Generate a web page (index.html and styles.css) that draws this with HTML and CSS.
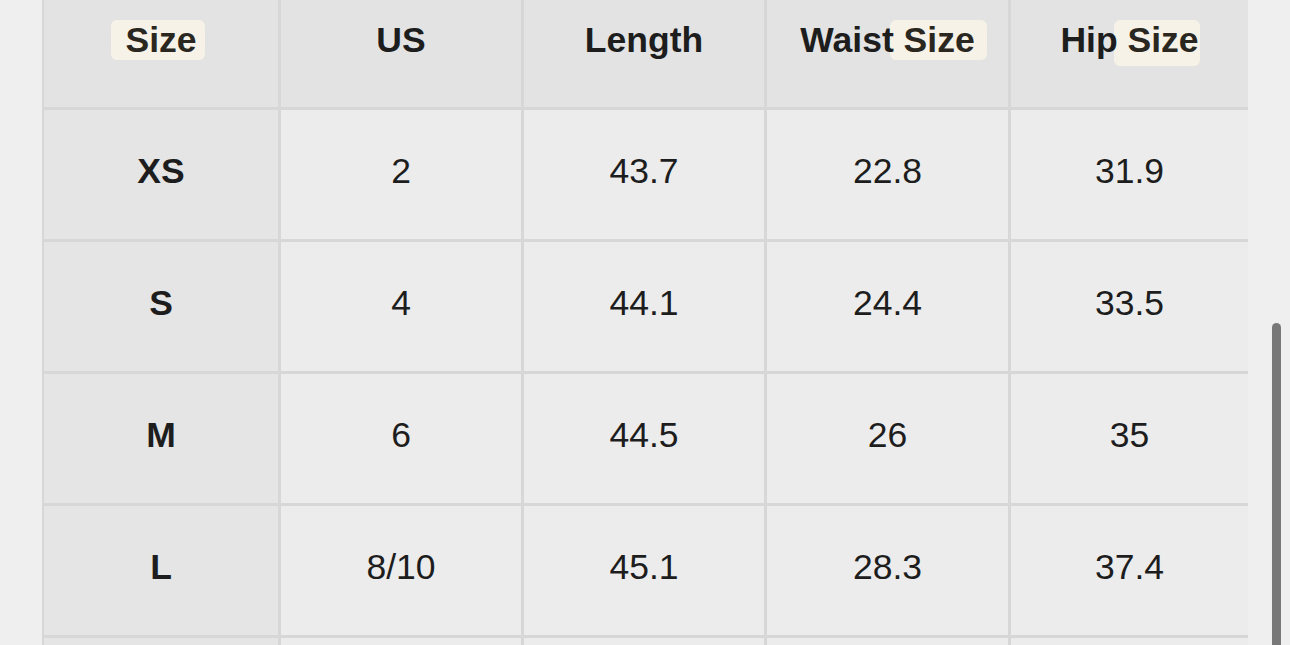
FILE: index.html
```html
<!DOCTYPE html>
<html lang="en">
<head>
<meta charset="utf-8">
<title>Size Chart</title>
<link rel="stylesheet" href="styles.css">
</head>
<body>
<div class="page">
  <div class="chart">
    <div class="cell head"><span class="txt"><span class="hl hl-solo">Size</span></span></div>
    <div class="cell head"><span class="txt">US</span></div>
    <div class="cell head"><span class="txt">Length</span></div>
    <div class="cell head"><span class="txt">Waist<span class="hl hl-waist"> Size</span></span></div>
    <div class="cell head"><span class="txt">Hip<span class="hl hl-hip"> Size</span></span></div>

    <div class="cell label"><span class="txt">XS</span></div>
    <div class="cell"><span class="txt">2</span></div>
    <div class="cell"><span class="txt">43.7</span></div>
    <div class="cell"><span class="txt">22.8</span></div>
    <div class="cell"><span class="txt">31.9</span></div>

    <div class="cell label"><span class="txt">S</span></div>
    <div class="cell"><span class="txt">4</span></div>
    <div class="cell"><span class="txt">44.1</span></div>
    <div class="cell"><span class="txt">24.4</span></div>
    <div class="cell"><span class="txt">33.5</span></div>

    <div class="cell label"><span class="txt">M</span></div>
    <div class="cell"><span class="txt">6</span></div>
    <div class="cell"><span class="txt">44.5</span></div>
    <div class="cell"><span class="txt">26</span></div>
    <div class="cell"><span class="txt">35</span></div>

    <div class="cell label"><span class="txt">L</span></div>
    <div class="cell"><span class="txt">8/10</span></div>
    <div class="cell"><span class="txt">45.1</span></div>
    <div class="cell"><span class="txt">28.3</span></div>
    <div class="cell"><span class="txt">37.4</span></div>

    <div class="cell label"></div>
    <div class="cell"></div>
    <div class="cell"></div>
    <div class="cell"></div>
    <div class="cell"></div>
  </div>
</div>
<div class="scrollbar"></div>
</body>
</html>
```

FILE: styles.css
```css
html, body {
  margin: 0;
  padding: 0;
  height: 100%;
  overflow: hidden;
  background: #efefef;
}

body {
  font-family: "Liberation Sans", Arial, sans-serif;
  color: #1d1d1d;
}

.page {
  padding-left: 42px;
  margin-top: -22px;
}

.chart {
  width: 1206px;
  display: grid;
  grid-template-columns: 234px 240px 240px 241px 237px;
  grid-auto-rows: 129px;
  gap: 3px;
  padding-left: 2px;
  box-sizing: border-box;
  background: #d7d7d7;
}

.cell {
  position: relative;
  z-index: 0;
  background: #ececec;
  display: flex;
  align-items: center;
  justify-content: center;
  font-size: 35.5px;
  line-height: 1;
  padding-bottom: 5px;
  box-sizing: border-box;
}

.txt {
  white-space: pre;
}

.head {
  background: #e3e3e3;
  font-weight: bold;
  padding-bottom: 4px;
}

.label {
  background: #e5e5e5;
  font-weight: bold;
}

.hl {
  position: relative;
  z-index: -1;
  background: #f6f2e7;
  color: #2a2720;
  border-radius: 6px;
  padding: 0 8px 0 14px;
  margin: 0 -8px 0 -14px;
}

.hl-waist {
  padding: 0 12px 0 4px;
  margin: 0 -12px 0 -4px;
}

.hl-hip {
  padding: 0 1px 6px 4px;
  margin: 0 -1px 0 -4px;
}

.scrollbar {
  position: fixed;
  left: 1272px;
  top: 323px;
  width: 9px;
  height: 340px;
  background: #787878;
  border-radius: 5px;
}
```
